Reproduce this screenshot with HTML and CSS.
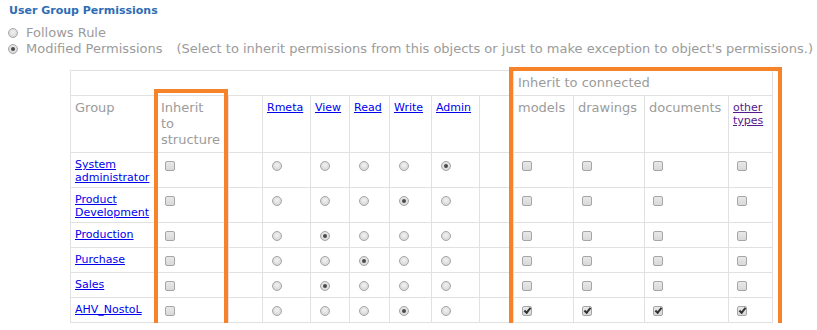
FILE: index.html
```html
<!DOCTYPE html>
<html>
<head>
<meta charset="utf-8">
<link rel="stylesheet" href="styles.css">
</head>
<body>
<div class="title">User Group Permissions</div>
<div class="opts">
  <div class="opt"><span class="rb"></span><span>Follows Rule</span></div>
  <div class="opt"><span class="rb on"></span><span>Modified Permissions</span><span class="hint">(Select to inherit permissions from this objects or just to make exception to object's permissions.)</span></div>
</div>
<div class="wrap">
  <table class="perm">
    <colgroup>
      <col class="c-group"><col class="c-inh"><col class="c-sp"><col class="c-rmeta"><col class="c-view"><col class="c-read"><col class="c-write"><col class="c-admin"><col class="c-sp"><col class="c-models"><col class="c-draw"><col class="c-docs"><col class="c-other">
    </colgroup>
    <tr class="r-top">
      <td colspan="9"></td>
      <td colspan="4" class="h">Inherit to connected</td>
    </tr>
    <tr class="r-head">
      <td class="h">Group</td>
      <td class="h">Inherit<br>to<br>structure</td>
      <td></td>
      <td class="l"><a href="#">Rmeta</a></td>
      <td class="l"><a href="#">View</a></td>
      <td class="l"><a href="#">Read</a></td>
      <td class="l"><a href="#">Write</a></td>
      <td class="l"><a href="#">Admin</a></td>
      <td></td>
      <td class="h">models</td>
      <td class="h">drawings</td>
      <td class="h">documents</td>
      <td class="l"><a href="#" class="vis">other types</a></td>
    </tr>
    <tr class="r-data r-tall">
      <td class="l"><a href="#">System administrator</a></td>
      <td><span class="cb"></span></td><td></td>
      <td><span class="rb"></span></td><td><span class="rb"></span></td><td><span class="rb"></span></td><td><span class="rb"></span></td><td><span class="rb on"></span></td>
      <td></td>
      <td><span class="cb"></span></td><td><span class="cb"></span></td><td><span class="cb"></span></td><td><span class="cb"></span></td>
    </tr>
    <tr class="r-data r-tall">
      <td class="l"><a href="#">Product Development</a></td>
      <td><span class="cb"></span></td><td></td>
      <td><span class="rb"></span></td><td><span class="rb"></span></td><td><span class="rb"></span></td><td><span class="rb on"></span></td><td><span class="rb"></span></td>
      <td></td>
      <td><span class="cb"></span></td><td><span class="cb"></span></td><td><span class="cb"></span></td><td><span class="cb"></span></td>
    </tr>
    <tr class="r-data">
      <td class="l"><a href="#">Production</a></td>
      <td><span class="cb"></span></td><td></td>
      <td><span class="rb"></span></td><td><span class="rb on"></span></td><td><span class="rb"></span></td><td><span class="rb"></span></td><td><span class="rb"></span></td>
      <td></td>
      <td><span class="cb"></span></td><td><span class="cb"></span></td><td><span class="cb"></span></td><td><span class="cb"></span></td>
    </tr>
    <tr class="r-data">
      <td class="l"><a href="#">Purchase</a></td>
      <td><span class="cb"></span></td><td></td>
      <td><span class="rb"></span></td><td><span class="rb"></span></td><td><span class="rb on"></span></td><td><span class="rb"></span></td><td><span class="rb"></span></td>
      <td></td>
      <td><span class="cb"></span></td><td><span class="cb"></span></td><td><span class="cb"></span></td><td><span class="cb"></span></td>
    </tr>
    <tr class="r-data">
      <td class="l"><a href="#">Sales</a></td>
      <td><span class="cb"></span></td><td></td>
      <td><span class="rb"></span></td><td><span class="rb on"></span></td><td><span class="rb"></span></td><td><span class="rb"></span></td><td><span class="rb"></span></td>
      <td></td>
      <td><span class="cb"></span></td><td><span class="cb"></span></td><td><span class="cb"></span></td><td><span class="cb"></span></td>
    </tr>
    <tr class="r-data">
      <td class="l"><a href="#">AHV_NostoL</a></td>
      <td><span class="cb"></span></td><td></td>
      <td><span class="rb"></span></td><td><span class="rb"></span></td><td><span class="rb"></span></td><td><span class="rb on"></span></td><td><span class="rb"></span></td>
      <td></td>
      <td><span class="cb on"></span></td><td><span class="cb on"></span></td><td><span class="cb on"></span></td><td><span class="cb on"></span></td>
    </tr>
  </table>
  <div class="mark m1"></div>
  <div class="mark m2"></div>
</div>
</body>
</html>
```
FILE: styles.css
```css
body {
  margin: 0;
  font-family: "DejaVu Sans", Verdana, sans-serif;
  background: #fff;
}
.title {
  margin: 4px 0 0 9px;
  font-size: 11px;
  line-height: 14px;
  font-weight: bold;
  color: #2e6db4;
}
.opts {
  margin-top: 7px;
}
.opt {
  display: flex;
  align-items: flex-start;
  height: 16px;
  line-height: 16px;
  font-size: 13px;
  color: #9b9b9b;
  padding-left: 8px;
  white-space: nowrap;
}
.opt .rb {
  margin: 3px 8px 0 0;
}
.hint {
  margin-left: 14px;
}
.wrap {
  position: relative;
  margin: 13px 0 0 70px;
  width: 703px;
}
.perm {
  border-collapse: collapse;
  table-layout: fixed;
  width: 703px;
}
.c-group { width: 86px; }
.c-inh { width: 72px; }
.c-sp { width: 34px; }
.c-rmeta { width: 48px; }
.c-view { width: 39px; }
.c-read { width: 40px; }
.c-write { width: 42px; }
.c-admin { width: 48px; }
.c-models { width: 60px; }
.c-draw { width: 71px; }
.c-docs { width: 84px; }
.c-other { width: 44px; }
.perm td {
  border: 1px solid #e1e1e1;
  padding: 4px 4px 0;
  vertical-align: top;
  font-size: 13px;
  line-height: 16px;
  color: #9b9b9b;
}
.perm td.l {
  font-size: 11px;
  line-height: 13px;
  padding-top: 5px;
}
.r-top { height: 25px; }
.r-head { height: 57px; }
.r-data { height: 25px; }
.r-data.r-tall { height: 35px; }
.r-data td { padding-top: 5px; }
.perm a {
  color: #0000ee;
  text-decoration: underline;
}
.perm a.vis {
  color: #551a8b;
}
.cb, .rb {
  display: block;
  width: 10px;
  height: 10px;
  box-sizing: border-box;
  border: 1px solid #a6a6a6;
  position: relative;
}
.cb {
  border-radius: 2px;
  background: linear-gradient(#e8e8e8, #d9d9d9);
  margin: 3px 0 0 4px;
}
.rb {
  border-radius: 50%;
  background: radial-gradient(circle at 50% 40%, #f2f2f2, #cfcfcf);
  margin: 3px 0 0 5px;
}
.rb.on::after {
  content: "";
  position: absolute;
  left: 2px;
  top: 2px;
  width: 4px;
  height: 4px;
  border-radius: 50%;
  background: #4a4a4a;
}
.cb.on::after {
  content: "";
  position: absolute;
  left: 1px;
  top: 1px;
  width: 5px;
  height: 2px;
  border-left: 2px solid #333;
  border-bottom: 2px solid #333;
  transform: rotate(-50deg);
}
.mark {
  position: absolute;
  border: 4px solid #f6832a;
  box-sizing: border-box;
  pointer-events: none;
}
.m1 {
  left: 84px;
  top: 19px;
  width: 74px;
  height: 238px;
}
.m2 {
  left: 439px;
  top: -3px;
  width: 273px;
  height: 260px;
}
```
